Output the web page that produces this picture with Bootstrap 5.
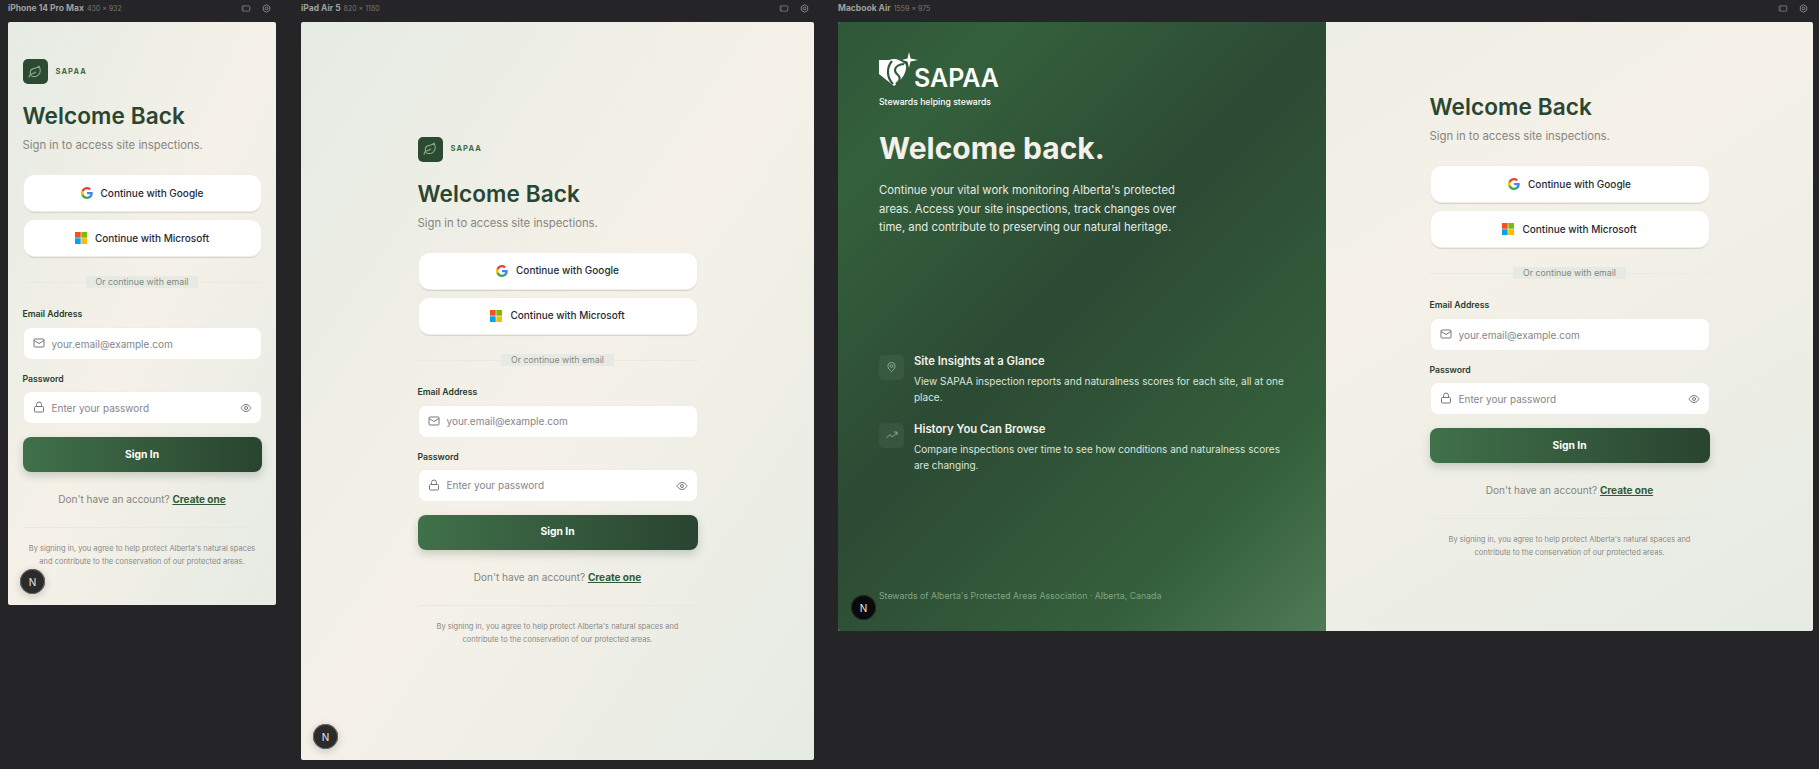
<!DOCTYPE html>
<html lang="en">
<head>
    <meta charset="UTF-8">
    <meta name="viewport" content="width=device-width, initial-scale=1.0">
    <title>SAPAA - Sign in previews</title>
    <link href="https://cdn.jsdelivr.net/npm/bootstrap@5.3.0/dist/css/bootstrap.min.css" rel="stylesheet">
    <style>
        html, body { height: 100%; overflow: hidden; }
        body { background: #252527; font-family: Inter, "Liberation Sans", sans-serif; padding-left: 8px; gap: 25px; }
        .device-head { height: 22px; padding-right: 5px; color: #a0a0a0; font-size: 8.5px; font-weight: 700; line-height: 16px; }
        .device-head span { color: #777; font-size: 7px; font-weight: 400; margin-left: 1px; }
        .device-tools { gap: 11px; color: #8a8a8c; padding-top: 4px; }
        .frame { position: relative; border-radius: 2px; overflow: hidden; background: linear-gradient(to bottom right, #e5ebe3 0%, #f5f1e8 50%, #e5ebe3 100%); }
        .phone-col { width: 268px; }
        .phone-frame { height: 583px; padding-top: 37px; }
        .tablet-col { width: 513px; }
        .tablet-frame { height: 738px; }
        .laptop-col { width: 975px; margin-left: -1px; }
        .laptop-frame { height: 609px; }
        .phone-frame .stack { width: 239px; }
        .stack { width: 280px; }

        .leaf-box { width: 25px; height: 25px; border-radius: 5px; background: #2c4a32; }
        .leaf-name { color: #3f6d47; font-size: 7.5px; font-weight: 700; letter-spacing: 1.1px; margin-left: 8px; }
        .welcome { color: #2a4632; font-size: 22.6px; font-weight: 600; line-height: 26px; letter-spacing: .1px; margin: 19px 0 7px; }
        .sub { color: #87867f; font-size: 11.3px; line-height: 18px; margin-bottom: 21px; }
        .oauth { height: 36px; margin: 0 1px 9px; width: calc(100% - 2px); gap: 8px; background: #fff; border: 0; border-radius: 11px; color: #1f2a33; font-size: 10px; font-weight: 500; padding: 0; box-shadow: 0 0 0 1px #eeede6, 0 2px 1px #d3d4cc; }
        .oauth:hover { background: #fff; color: #1f2a33; }
        .or-line { height: 12px; margin-top: 20px; }
        .or-line::before { content: ""; position: absolute; left: 0; right: 0; top: 6px; border-top: 1px solid #e6eae2; }
        .or-text { position: relative; background: #e5ebe4; color: #85867f; font-size: 8.8px; line-height: 12px; padding: 0 10px; }
        .field-label { display: block; color: #2a3d30; font-size: 8.7px; font-weight: 600; line-height: 12px; margin: 20px 0 7px; }
        .field-label.second { margin: 13px 0 6px; }
        .field { height: 33px; border: 1px solid #eeede6; border-radius: 8px; background: #fff; font-size: 10px; padding: 0 8px 0 28px; box-shadow: none; color: #333; }
        .field::placeholder { color: #85858a; }
        .field-icon { position: absolute; left: 10px; top: 10px; color: #77777a; }
        .eye-icon { position: absolute; right: 10px; top: 11px; color: #77777a; }
        .signin { height: 35px; margin-top: 13px; border: 0; border-radius: 8px; color: #fff; font-size: 10.3px; font-weight: 700; padding: 0; background: linear-gradient(to right, #40714a 0%, #294430 100%); box-shadow: 0 4px 9px rgba(44, 74, 50, .22); }
        .signin:hover { color: #fff; }
        .have-acct { color: #85857e; font-size: 10px; line-height: 15px; margin-top: 20px; }
        .have-acct a { color: #2f5a39; font-weight: 700; }
        .stack-rule { border-top: 1px solid #e6e9e1; margin-top: 20px; padding-top: 14px; }
        .fine { color: #8b8a86; font-size: 7.5px; line-height: 13px; padding: 0 4px; }
        .dev-n { position: absolute; left: 12px; bottom: 11px; width: 25px; height: 25px; border-radius: 50%; background: #2b2b2b; color: #e8e8e8; font-size: 10px; font-weight: 400; line-height: 1; box-shadow: 0 2px 8px rgba(0, 0, 0, .2), 0 0 0 1px #6a6a6a inset; }
        .dev-n.dark { background: #0a0a0a; box-shadow: 0 0 0 1px #2a2a2a inset; left: 13px; }

        .hero { width: 488px; height: 100%; padding: 30px 33px 0 41px; color: #f5f1e8; background: linear-gradient(135deg, #2f5738 0%, #34603c 16%, #2c4a34 46%, #35603c 80%, #4f7a55 100%); }
        .form-side { width: 487px; height: 100%; }
        .brand-top { height: 36px; }
        .brand-text { font-size: 25px; font-weight: 600; color: #fff; line-height: 20px; margin-left: -4px; padding-top: 16px; }
        .brand-tag { font-size: 8.7px; font-weight: 500; color: #fff; line-height: 12px; margin-top: 8px; }
        .hero-title { color: #f5f1e8; font-size: 30px; font-weight: 700; line-height: 36px; margin: 22px 0 15px; }
        .hero-copy { color: #e5ebe4; font-size: 11.3px; line-height: 18.5px; width: 304px; margin-bottom: 0; }
        .feature-list { margin-top: 118px; gap: 18px; }
        .feature-icon { width: 25px; height: 25px; border-radius: 5px; background: rgba(255, 255, 255, .05); color: #9cb8a0; flex: none; }
        .feature-body { margin-left: 2px; }
        .feature-title { color: #f5f1e8; font-size: 11.3px; font-weight: 600; line-height: 12px; margin-bottom: 6px; }
        .feature-copy { color: #dde5dc; font-size: 10px; line-height: 16px; margin: 0; }
        .hero-foot { position: absolute; left: 41px; top: 568px; color: #7ea584; font-size: 8.75px; line-height: 12px; }
    </style>
</head>
<body class="d-flex align-items-start">

    <!-- icon sprites, reused in the three previews -->
    <svg width="0" height="0" class="position-absolute">
        <symbol id="leaf" viewBox="0 0 24 24"><path d="M11 20A7 7 0 0 1 9.8 6.1C15.5 5 17 4.48 19 2c1 2 2 4.18 2 8 0 5.5-4.78 10-10 10Z" fill="none" stroke="currentColor" stroke-width="2" stroke-linecap="round" stroke-linejoin="round"/><path d="M2 21c0-3 1.85-5.36 5.08-6C9.5 14.52 12 13 13 12" fill="none" stroke="currentColor" stroke-width="2" stroke-linecap="round"/></symbol>
        <symbol id="google" viewBox="0 0 24 24"><path fill="#4285F4" d="M23.5 12.3c0-.8-.1-1.6-.2-2.3H12v4.5h6.5c-.3 1.5-1.1 2.8-2.4 3.6v3h3.9c2.2-2.1 3.5-5.1 3.5-8.8z"/><path fill="#34A853" d="M12 24c3.2 0 6-1.1 8-2.9l-3.9-3c-1.1.7-2.5 1.2-4.1 1.2-3.1 0-5.8-2.1-6.7-5H1.3v3.1C3.3 21.3 7.3 24 12 24z"/><path fill="#FBBC05" d="M5.3 14.3c-.5-1.5-.5-3.1 0-4.6V6.6h-4c-1.7 3.3-1.7 7.5 0 10.8l4-3.1z"/><path fill="#EA4335" d="M12 4.7c1.8 0 3.3.6 4.6 1.8L20 3.1C17.9 1.2 15.2 0 12 0 7.3 0 3.3 2.7 1.3 6.6l4 3.1c.9-2.9 3.6-5 6.7-5z"/></symbol>
        <symbol id="ms" viewBox="0 0 24 24"><path fill="#F25022" d="M0 0h11.4v11.4H0z"/><path fill="#7FBA00" d="M12.6 0H24v11.4H12.6z"/><path fill="#00A4EF" d="M0 12.6h11.4V24H0z"/><path fill="#FFB900" d="M12.6 12.6H24V24H12.6z"/></symbol>
        <symbol id="mail" viewBox="0 0 24 24"><rect x="2" y="4" width="20" height="16" rx="2" fill="none" stroke="currentColor" stroke-width="2"/><path d="m22 7-10 6L2 7" fill="none" stroke="currentColor" stroke-width="2"/></symbol>
        <symbol id="lock" viewBox="0 0 24 24"><rect x="3" y="11" width="18" height="11" rx="2" fill="none" stroke="currentColor" stroke-width="2"/><path d="M7 11V7a5 5 0 0 1 10 0v4" fill="none" stroke="currentColor" stroke-width="2"/></symbol>
        <symbol id="eye" viewBox="0 0 24 24"><path d="M2 12s3.5-7 10-7 10 7 10 7-3.5 7-10 7-10-7-10-7Z" fill="none" stroke="currentColor" stroke-width="2"/><circle cx="12" cy="12" r="3" fill="none" stroke="currentColor" stroke-width="2"/></symbol>
        <symbol id="frame-ic" viewBox="0 0 24 24"><rect x="2" y="5" width="20" height="14" rx="1.5" fill="none" stroke="currentColor" stroke-width="2"/><path d="M5 5v14" stroke="currentColor" stroke-width="1"/></symbol>
        <symbol id="gear" viewBox="0 0 24 24"><path d="M12 2 20.5 7v10L12 22l-8.5-5V7Z" fill="none" stroke="currentColor" stroke-width="2.5" stroke-linejoin="round"/><circle cx="12" cy="12" r="3.5" fill="none" stroke="currentColor" stroke-width="2.5"/></symbol>
        <symbol id="pin" viewBox="0 0 24 24"><path d="M20 10c0 6-8 12-8 12s-8-6-8-12a8 8 0 0 1 16 0Z" fill="none" stroke="currentColor" stroke-width="1.7"/><circle cx="12" cy="10" r="3" fill="none" stroke="currentColor" stroke-width="1.7"/></symbol>
        <symbol id="trend" viewBox="0 0 24 24"><path d="m1 18 7-7 5 5 9-9" fill="none" stroke="currentColor" stroke-width="1.7"/><path d="M16 6h6v6" fill="none" stroke="currentColor" stroke-width="1.7"/></symbol>
    </svg>

    <!-- iPhone -->
    <div class="phone-col">
        <div class="device-head d-flex justify-content-between">
            <div>iPhone 14 Pro Max <span>430 x 932</span></div>
            <div class="device-tools d-flex"><svg width="10" height="9"><use href="#frame-ic"/></svg><svg width="9" height="9"><use href="#gear"/></svg></div>
        </div>
        <div class="frame phone-frame d-flex justify-content-center align-items-start">
            <div class="stack">
                <div class="d-flex align-items-center">
                    <div class="leaf-box d-flex align-items-center justify-content-center"><svg width="14" height="14" color="#7fa886"><use href="#leaf"/></svg></div>
                    <div class="leaf-name">SAPAA</div>
                </div>
                <h1 class="welcome">Welcome Back</h1>
                <p class="sub">Sign in to access site inspections.</p>
                <button class="btn oauth d-flex align-items-center justify-content-center"><svg width="12" height="12"><use href="#google"/></svg>Continue with Google</button>
                <button class="btn oauth d-flex align-items-center justify-content-center"><svg width="12" height="12"><use href="#ms"/></svg>Continue with Microsoft</button>
                <div class="or-line position-relative d-flex justify-content-center"><span class="or-text">Or continue with email</span></div>
                <label class="field-label">Email Address</label>
                <div class="position-relative"><svg class="field-icon" width="12" height="12"><use href="#mail"/></svg><input class="form-control field" type="email" placeholder="your.email@example.com"></div>
                <label class="field-label second">Password</label>
                <div class="position-relative"><svg class="field-icon" width="12" height="12"><use href="#lock"/></svg><input class="form-control field" type="password" placeholder="Enter your password"><svg class="eye-icon" width="12" height="12"><use href="#eye"/></svg></div>
                <button class="btn signin w-100">Sign In</button>
                <div class="have-acct text-center">Don't have an account? <a href="#">Create one</a></div>
                <div class="stack-rule"><div class="fine text-center">By signing in, you agree to help protect Alberta's natural spaces and contribute to the conservation of our protected areas.</div></div>
            </div>
            <div class="dev-n d-flex align-items-center justify-content-center">N</div>
        </div>
    </div>

    <!-- iPad -->
    <div class="tablet-col">
        <div class="device-head d-flex justify-content-between">
            <div>iPad Air 5 <span>820 x 1180</span></div>
            <div class="device-tools d-flex"><svg width="10" height="9"><use href="#frame-ic"/></svg><svg width="9" height="9"><use href="#gear"/></svg></div>
        </div>
        <div class="frame tablet-frame d-flex justify-content-center align-items-center">
            <div class="stack">
                <div class="d-flex align-items-center">
                    <div class="leaf-box d-flex align-items-center justify-content-center"><svg width="14" height="14" color="#7fa886"><use href="#leaf"/></svg></div>
                    <div class="leaf-name">SAPAA</div>
                </div>
                <h1 class="welcome">Welcome Back</h1>
                <p class="sub">Sign in to access site inspections.</p>
                <button class="btn oauth d-flex align-items-center justify-content-center"><svg width="12" height="12"><use href="#google"/></svg>Continue with Google</button>
                <button class="btn oauth d-flex align-items-center justify-content-center"><svg width="12" height="12"><use href="#ms"/></svg>Continue with Microsoft</button>
                <div class="or-line position-relative d-flex justify-content-center"><span class="or-text">Or continue with email</span></div>
                <label class="field-label">Email Address</label>
                <div class="position-relative"><svg class="field-icon" width="12" height="12"><use href="#mail"/></svg><input class="form-control field" type="email" placeholder="your.email@example.com"></div>
                <label class="field-label second">Password</label>
                <div class="position-relative"><svg class="field-icon" width="12" height="12"><use href="#lock"/></svg><input class="form-control field" type="password" placeholder="Enter your password"><svg class="eye-icon" width="12" height="12"><use href="#eye"/></svg></div>
                <button class="btn signin w-100">Sign In</button>
                <div class="have-acct text-center">Don't have an account? <a href="#">Create one</a></div>
                <div class="stack-rule"><div class="fine text-center">By signing in, you agree to help protect Alberta's natural spaces and contribute to the conservation of our protected areas.</div></div>
            </div>
            <div class="dev-n d-flex align-items-center justify-content-center">N</div>
        </div>
    </div>

    <!-- Macbook -->
    <div class="laptop-col">
        <div class="device-head d-flex justify-content-between">
            <div>Macbook Air <span>1559 x 975</span></div>
            <div class="device-tools d-flex"><svg width="10" height="9"><use href="#frame-ic"/></svg><svg width="9" height="9"><use href="#gear"/></svg></div>
        </div>
        <div class="frame laptop-frame d-flex">
            <div class="hero">
                <div class="brand-top d-flex align-items-start">
                    <svg width="39" height="36" viewBox="0 0 39 36">
                        <path fill="#fff" d="M0 8h10c5-2 11-1 17 5 1 7-4 15-12 21L0 22Z"/>
                        <path fill="none" stroke="#32593a" stroke-width="2.2" d="M13 9C7 16 8 26 14 32"/>
                        <path fill="none" stroke="#32593a" stroke-width="2.2" d="M25 12c-10 1-11 7-6 11 3 3 2 6-2 9"/>
                        <path fill="#fff" d="M30 0l1.5 6.5L39 8l-7.500 1.500L30 16l-1.500-6.500L23 8l5.500-1.500Z"/>
                    </svg>
                    <div class="brand-text">SAPAA</div>
                </div>
                <div class="brand-tag">Stewards helping stewards</div>
                <h2 class="hero-title">Welcome back.</h2>
                <p class="hero-copy">Continue your vital work monitoring Alberta's protected areas. Access your site inspections, track changes over time, and contribute to preserving our natural heritage.</p>
                <div class="feature-list d-flex flex-column">
                    <div class="d-flex gap-2">
                        <div class="feature-icon d-flex align-items-center justify-content-center"><svg width="11" height="12"><use href="#pin"/></svg></div>
                        <div class="feature-body">
                            <div class="feature-title">Site Insights at a Glance</div>
                            <p class="feature-copy">View SAPAA inspection reports and naturalness scores for each site, all at one place.</p>
                        </div>
                    </div>
                    <div class="d-flex gap-2">
                        <div class="feature-icon d-flex align-items-center justify-content-center"><svg width="12" height="12"><use href="#trend"/></svg></div>
                        <div class="feature-body">
                            <div class="feature-title">History You Can Browse</div>
                            <p class="feature-copy">Compare inspections over time to see how conditions and naturalness scores are changing.</p>
                        </div>
                    </div>
                </div>
                <div class="hero-foot">Stewards of Alberta's Protected Areas Association · Alberta, Canada</div>
            </div>
            <div class="form-side d-flex align-items-center justify-content-center">
                <div class="stack">
                    <h1 class="welcome mt-0">Welcome Back</h1>
                    <p class="sub">Sign in to access site inspections.</p>
                    <button class="btn oauth d-flex align-items-center justify-content-center"><svg width="12" height="12"><use href="#google"/></svg>Continue with Google</button>
                    <button class="btn oauth d-flex align-items-center justify-content-center"><svg width="12" height="12"><use href="#ms"/></svg>Continue with Microsoft</button>
                    <div class="or-line position-relative d-flex justify-content-center"><span class="or-text">Or continue with email</span></div>
                    <label class="field-label">Email Address</label>
                    <div class="position-relative"><svg class="field-icon" width="12" height="12"><use href="#mail"/></svg><input class="form-control field" type="email" placeholder="your.email@example.com"></div>
                    <label class="field-label second">Password</label>
                    <div class="position-relative"><svg class="field-icon" width="12" height="12"><use href="#lock"/></svg><input class="form-control field" type="password" placeholder="Enter your password"><svg class="eye-icon" width="12" height="12"><use href="#eye"/></svg></div>
                    <button class="btn signin w-100">Sign In</button>
                    <div class="have-acct text-center">Don't have an account? <a href="#">Create one</a></div>
                    <div class="stack-rule"><div class="fine text-center">By signing in, you agree to help protect Alberta's natural spaces and contribute to the conservation of our protected areas.</div></div>
                </div>
            </div>
            <div class="dev-n dark d-flex align-items-center justify-content-center">N</div>
        </div>
    </div>

    <script src="https://cdn.jsdelivr.net/npm/bootstrap@5.3.0/dist/js/bootstrap.bundle.min.js"></script>
</body>
</html>
